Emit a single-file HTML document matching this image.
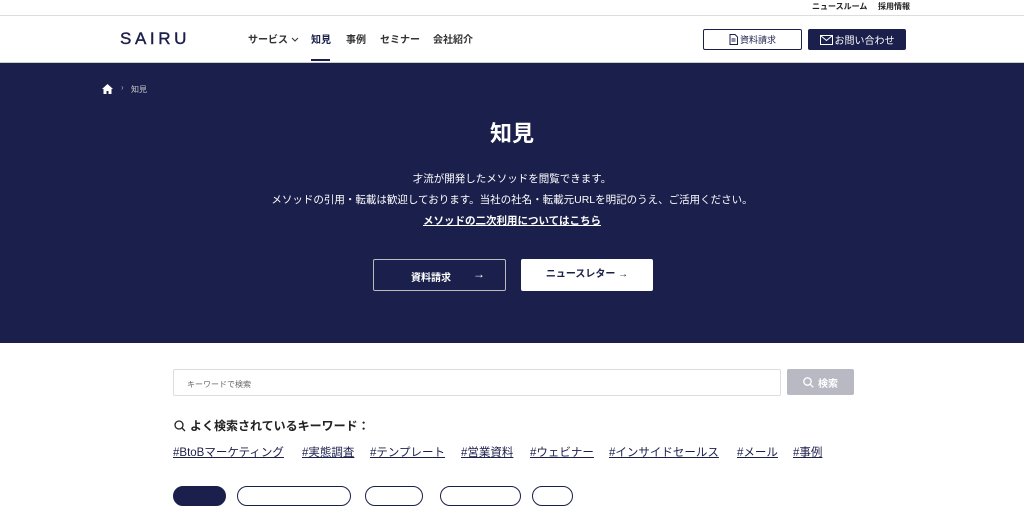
<!DOCTYPE html>
<html><head><meta charset="utf-8"><style>
*{margin:0;padding:0;box-sizing:border-box}
body{width:1024px;height:489px;overflow:hidden;background:#fff;font-family:"Liberation Sans","Noto Sans CJK JP",sans-serif;color:#1b1f4b;position:relative}
.a{position:absolute}
.top{top:0;left:0;width:1024px;height:16px;border-bottom:1px solid #ddd;font-size:8px;font-weight:bold;color:#222}
.nav span{position:absolute;top:33px;font-size:10px;font-weight:bold;color:#333;line-height:16px}
.hero{top:63px;left:0;width:1024px;height:280px;background:#1b1f4b;color:#fff}
.tag{font-size:11.5px;text-decoration:underline;color:#1b1f4b;top:444px;white-space:nowrap}
.pill{top:486px;height:20px;border:1px solid #1b1f4b;border-radius:10px}
</style></head><body>
<div class="a top"><span class="a" style="left:812px;top:1px">ニュースルーム</span><span class="a" style="left:878px;top:1px">採用情報</span></div>
<div class="a" style="left:120px;top:29px;font-size:17px;letter-spacing:3.6px;font-weight:normal;color:#1b1f4b;-webkit-text-stroke:.4px #1b1f4b">SAIRU</div>
<div class="nav">
<span style="left:248px">サービス <svg width="8" height="6" viewBox="0 0 8 6"><path d="M1 1l3 3 3-3" stroke="#333" fill="none"/></svg></span>
<span style="left:311px;color:#1b1f4b">知見</span>
<span style="left:346px">事例</span>
<span style="left:380px">セミナー</span>
<span style="left:433px">会社紹介</span>
</div>
<div class="a" style="left:311px;top:59px;width:19px;height:2px;background:#1b1f4b"></div>
<div class="a" style="left:703px;top:29px;width:99px;height:21px;border:1px solid #1b1f4b;border-radius:2px;font-size:9px;color:#1b1f4b;display:flex;align-items:center;justify-content:center;gap:2px"><svg width="9" height="11" viewBox="0 0 9 11"><path d="M1 .5h5l2.5 2.5v7.5h-7.5z M2.5 5h4 M2.5 7h4" stroke="#1b1f4b" fill="none"/></svg>資料請求</div>
<div class="a" style="left:808px;top:29px;width:98px;height:21px;background:#1b1f4b;border-radius:2px;font-size:10px;color:#fff;display:flex;align-items:center;justify-content:center;gap:2px"><svg width="13" height="10" viewBox="0 0 13 10"><rect x=".5" y=".5" width="12" height="9" stroke="#fff" fill="none"/><path d="M.5 .5l6 5 6-5" stroke="#fff" fill="none"/></svg>お問い合わせ</div>
<div class="a" style="top:62px;left:0;width:1024px;height:1px;background:#ccc"></div>
<div class="a hero">
<svg class="a" style="left:102px;top:21px" width="11" height="10" viewBox="0 0 11 10"><path d="M5.5 0L0 5h1.5v5h3V7h2v3h3V5H11z" fill="#fff"/></svg>
<span class="a" style="left:121px;top:20px;font-size:8px;color:#aaa">›</span>
<span class="a" style="left:131px;top:21px;font-size:8px;color:#ccc">知見</span>
<div class="a" style="left:0;width:1024px;top:53px;text-align:center;font-size:22px;font-weight:bold">知見</div>
<div class="a" style="left:0;width:1024px;top:106px;text-align:center;font-size:10.5px;line-height:21px">才流が開発したメソッドを閲覧できます。<br>メソッドの引用・転載は歓迎しております。当社の社名・転載元URLを明記のうえ、ご活用ください。<br><b style="text-decoration:underline">メソッドの二次利用についてはこちら</b></div>
<div class="a" style="left:373px;top:196px;width:133px;height:32px;border:1px solid #bbb;border-radius:2px;font-size:10px;font-weight:bold"><span class="a" style="left:37px;top:9px">資料請求</span><span class="a" style="left:99px;top:7px;font-size:12px">→</span></div>
<div class="a" style="left:521px;top:196px;width:132px;height:32px;background:#fff;border-radius:2px;font-size:10px;font-weight:bold;color:#1b1f4b;text-align:center;line-height:32px">ニュースレター →</div>
</div>
<div class="a" style="left:173px;top:369px;width:608px;height:27px;border:1px solid #ddd;border-radius:2px;font-size:8px;color:#666;padding:9px 0 0 13px">キーワードで検索</div>
<div class="a" style="left:787px;top:369px;width:67px;height:26px;background:#b8b9c3;border-radius:2px;color:#fff;font-size:10px;font-weight:bold;display:flex;align-items:center;justify-content:center;gap:4px"><svg width="11" height="11" viewBox="0 0 11 11"><circle cx="4.5" cy="4.5" r="3.7" stroke="#fff" stroke-width="1.3" fill="none"/><path d="M7.3 7.3l3 3" stroke="#fff" stroke-width="1.3"/></svg>検索</div>
<div class="a" style="left:174px;top:417px;font-size:12px;font-weight:bold;color:#222;display:flex;align-items:center;gap:4px"><svg width="12" height="12" viewBox="0 0 12 12"><circle cx="5" cy="5" r="4" stroke="#222" stroke-width="1.3" fill="none"/><path d="M8 8l3 3" stroke="#222" stroke-width="1.3"/></svg>よく検索されているキーワード：</div>
<span class="a tag" style="left:173px">#BtoBマーケティング</span>
<span class="a tag" style="left:302px">#実態調査</span>
<span class="a tag" style="left:370px">#テンプレート</span>
<span class="a tag" style="left:461px">#営業資料</span>
<span class="a tag" style="left:530px">#ウェビナー</span>
<span class="a tag" style="left:609px">#インサイドセールス</span>
<span class="a tag" style="left:737px">#メール</span>
<span class="a tag" style="left:793px">#事例</span>
<div class="a pill" style="left:173px;width:53px;background:#1b1f4b"></div>
<div class="a pill" style="left:237px;width:114px"></div>
<div class="a pill" style="left:365px;width:58px"></div>
<div class="a pill" style="left:440px;width:81px"></div>
<div class="a pill" style="left:532px;width:41px"></div>
</body></html>
